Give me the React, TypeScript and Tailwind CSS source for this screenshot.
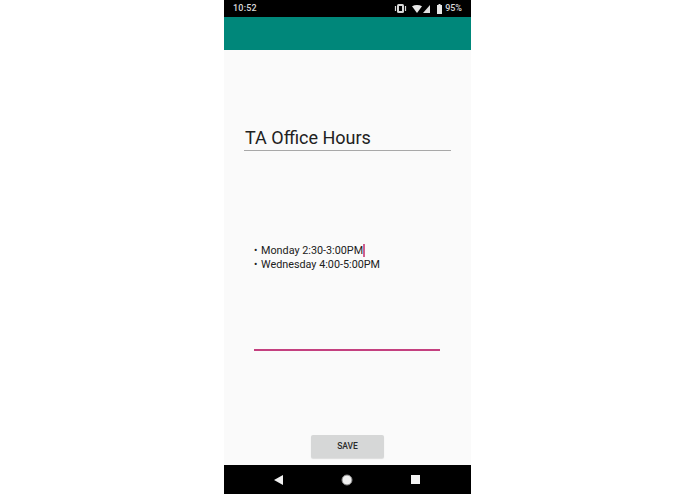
import React from 'react';

const roboto = { fontFamily: 'Roboto, sans-serif' };

const StatusIcons = () => (
  <div className="flex items-center">
    {/* vibrate */}
    <svg width="13" height="9" viewBox="0 0 13 9" className="text-[#d8d8d8]">
      <rect x="3" y="0" width="7" height="9" rx="1.5" fill="currentColor" />
      <rect x="5" y="2" width="3" height="5" fill="#000" />
      <path d="M1.5 2v5M11.5 2v5" stroke="currentColor" strokeWidth="1.2" />
    </svg>
    {/* wifi */}
    <svg width="10" height="8" viewBox="0 0 10 8" className="ml-[5px] text-[#e8e8e8]">
      <path d="M0 1.2C3-.4 7-.4 10 1.2L5 8z" fill="currentColor" />
    </svg>
    {/* signal */}
    <svg width="7" height="8" viewBox="0 0 7 8" className="ml-[1px] text-[#e0e0e0]">
      <path d="M7 0v8H0z" fill="currentColor" />
    </svg>
    {/* battery */}
    <svg width="5" height="10" viewBox="0 0 5 10" className="ml-[7px] text-[#e8e8e8]">
      <path d="M1.5 0h2v1H5v9H0V1h1.5z" fill="currentColor" />
    </svg>
    <span className="ml-[3px] text-[9px] font-medium leading-none text-[#d8d8d8]">95%</span>
  </div>
);

export default function App() {
  return (
    <div className="flex h-[494px] w-[695px] justify-center bg-white" style={roboto}>
      <div className="flex h-full w-[247px] flex-col bg-[#fafafa]">
        {/* Status bar */}
        <div className="flex h-[17px] shrink-0 items-center justify-between bg-black pl-[9px] pr-[9px]">
          <span className="text-[9px] font-medium leading-none tracking-[0.2px] text-[#d8d8d8]">10:52</span>
          <StatusIcons />
        </div>

        {/* App bar */}
        <div className="h-[33px] shrink-0 bg-[#00877a]" />

        {/* Title field */}
        <div className="mx-[20px] mt-[76px] h-[25px] border-b border-[#a8a8a8] pl-[1px]">
          <div className="text-[18px] leading-[24px] text-[#212121]">TA Office Hours</div>
        </div>

        {/* Body field */}
        <div className="ml-[30px] mr-[31px] mt-[93px] flex h-[107px] flex-col border-b-2 border-[#c4407f]">
          <div className="text-[10.8px] leading-[13.5px] text-[#212121]">
            <div className="flex items-center">
              <span className="w-[7px] text-[10px]">•</span>
              <span>Monday 2:30-3:00PM</span>
              <span className="h-[13px] w-[2px] bg-[#d0608f]" />
            </div>
            <div className="flex items-center">
              <span className="w-[7px] text-[10px]">•</span>
              <span>Wednesday 4:00-5:00PM</span>
            </div>
          </div>
        </div>

        {/* Save button */}
        <div className="mt-[84px] flex justify-center">
          <button className="flex h-[23px] w-[73px] items-center justify-center rounded-[2px] bg-[#d6d7d7] text-[8.5px] font-medium text-[#2b2b2b] shadow-[0_1px_1px_rgba(0,0,0,0.12)]">
            SAVE
          </button>
        </div>

        <div className="flex-1" />

        {/* Nav bar */}
        <div className="relative flex h-[29px] shrink-0 items-center bg-black">
          <div className="flex w-full items-center justify-between pl-[50px] pr-[51px]">
            <svg width="9" height="10" viewBox="0 0 9 10"><path d="M9 0v10L0 5z" fill="#f0f0f0" /></svg>
            <svg width="12" height="12" viewBox="0 0 12 12"><circle cx="6" cy="6" r="5" fill="#f0f0f0" stroke="#8a8a8a" strokeWidth="1" /></svg>
            <svg width="9" height="9" viewBox="0 0 9 9"><rect width="9" height="9" fill="#f4f4f4" /></svg>
          </div>
        </div>
      </div>
    </div>
  );
}
